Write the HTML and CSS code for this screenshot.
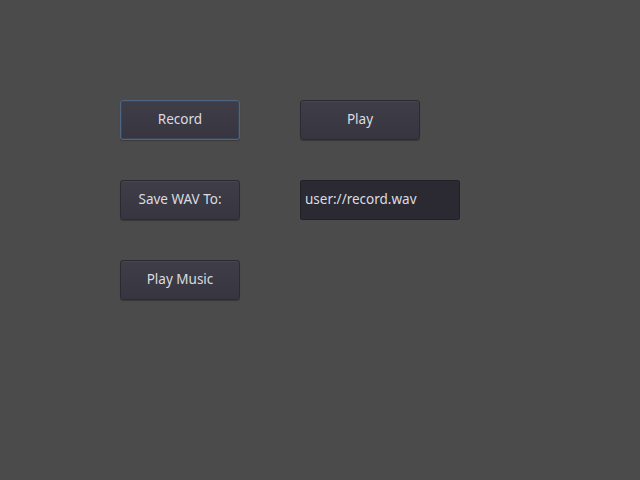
FILE: index.html
```html
<!DOCTYPE html>
<html>
<head>
<meta charset="utf-8">
<link rel="stylesheet" href="styles.css">
</head>
<body>
<div class="panel">
  <button class="btn focus">Record</button>
  <button class="btn">Play</button>
  <button class="btn">Save WAV To:</button>
  <div class="edit">user://record.wav</div>
  <button class="btn">Play Music</button>
</div>
</body>
</html>
```
FILE: styles.css
```css
html, body {
  margin: 0;
  padding: 0;
  width: 640px;
  height: 480px;
  background: #4b4b4b;
  overflow: hidden;
}
.panel {
  display: grid;
  grid-template-columns: 120px 160px;
  grid-auto-rows: 40px;
  column-gap: 60px;
  row-gap: 40px;
  padding: 100px 0 0 120px;
  font-family: "Noto Sans", "DejaVu Sans", sans-serif;
  font-size: 13.5px;
}
.btn {
  width: 120px;
  height: 40px;
  margin: 0;
  padding: 0 0 2px 0;
  font: inherit;
  color: #dcdce0;
  background: linear-gradient(#3e3d48, #363540);
  border: 1px solid #2b2a31;
  border-radius: 3px;
  box-shadow: inset 0 1px 0 #46454f, 0 1px 1px rgba(0,0,0,0.25);
  text-align: center;
}
.btn.focus {
  border-color: #4f6683;
  box-shadow: inset 0 0 0 1px #3a4556, 0 1px 1px rgba(0,0,0,0.25);
}
.edit {
  width: 160px;
  height: 40px;
  box-sizing: border-box;
  background: #2b2a33;
  border: 1px solid #222128;
  border-radius: 2px;
  color: #dcdce0;
  padding: 0 0 2px 4px;
  display: flex;
  align-items: center;
}
```
